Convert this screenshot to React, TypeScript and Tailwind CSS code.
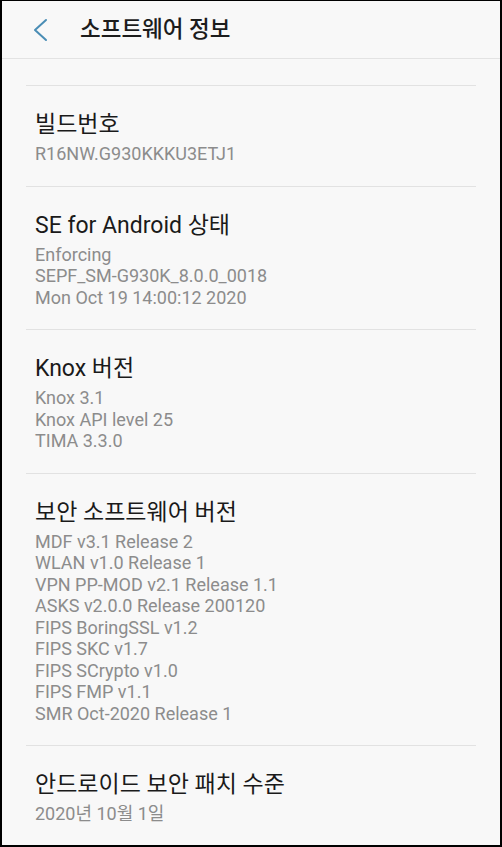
const sections = [
  { title: "빌드번호", lines: ["R16NW.G930KKKU3ETJ1"] },
  {
    title: "SE for Android 상태",
    lines: ["Enforcing", "SEPF_SM-G930K_8.0.0_0018", "Mon Oct 19 14:00:12 2020"],
  },
  { title: "Knox 버전", lines: ["Knox 3.1", "Knox API level 25", "TIMA 3.3.0"] },
  {
    title: "보안 소프트웨어 버전",
    lines: [
      "MDF v3.1 Release 2",
      "WLAN v1.0 Release 1",
      "VPN PP-MOD v2.1 Release 1.1",
      "ASKS v2.0.0 Release 200120",
      "FIPS BoringSSL v1.2",
      "FIPS SKC v1.7",
      "FIPS SCrypto v1.0",
      "FIPS FMP v1.1",
      "SMR Oct-2020 Release 1",
    ],
  },
  { title: "안드로이드 보안 패치 수준", lines: ["2020년 10월 1일"] },
];

export default function App() {
  return (
    <div
      className="h-[847px] w-[502px] overflow-hidden border-x-2 border-t border-b-2 border-black bg-[#f8f8f8]"
      style={{ fontFamily: "Roboto, 'Noto Sans CJK KR', sans-serif" }}
    >
      <header className="flex h-[58px] items-center border-b border-[#e3e3e3]">
        <svg className="ml-[30px] h-[24px] w-[16px]" viewBox="0 0 16 24" fill="none">
          <polyline
            points="14,2 3,12 14,22"
            stroke="#4a8db5"
            strokeWidth="2"
            strokeLinecap="round"
            strokeLinejoin="round"
          />
        </svg>
        <h1 className="ml-[32px] text-[22.5px] font-medium text-[#1c1c1c]">소프트웨어 정보</h1>
      </header>
      <div className="px-[24px] pt-[26px]">
        {sections.map((s) => (
          <div key={s.title} className="border-t border-[#e2e2e2] px-[9px] pt-[25px] pb-[21px]">
            <div className="text-[23px] leading-[28px] text-[#1a1a1a]">{s.title}</div>
            <div className="mt-[4px] text-[18px] leading-[21.5px] text-[#8c8c8c]">
              {s.lines.map((l) => (
                <div key={l}>{l}</div>
              ))}
            </div>
          </div>
        ))}
      </div>
    </div>
  );
}
